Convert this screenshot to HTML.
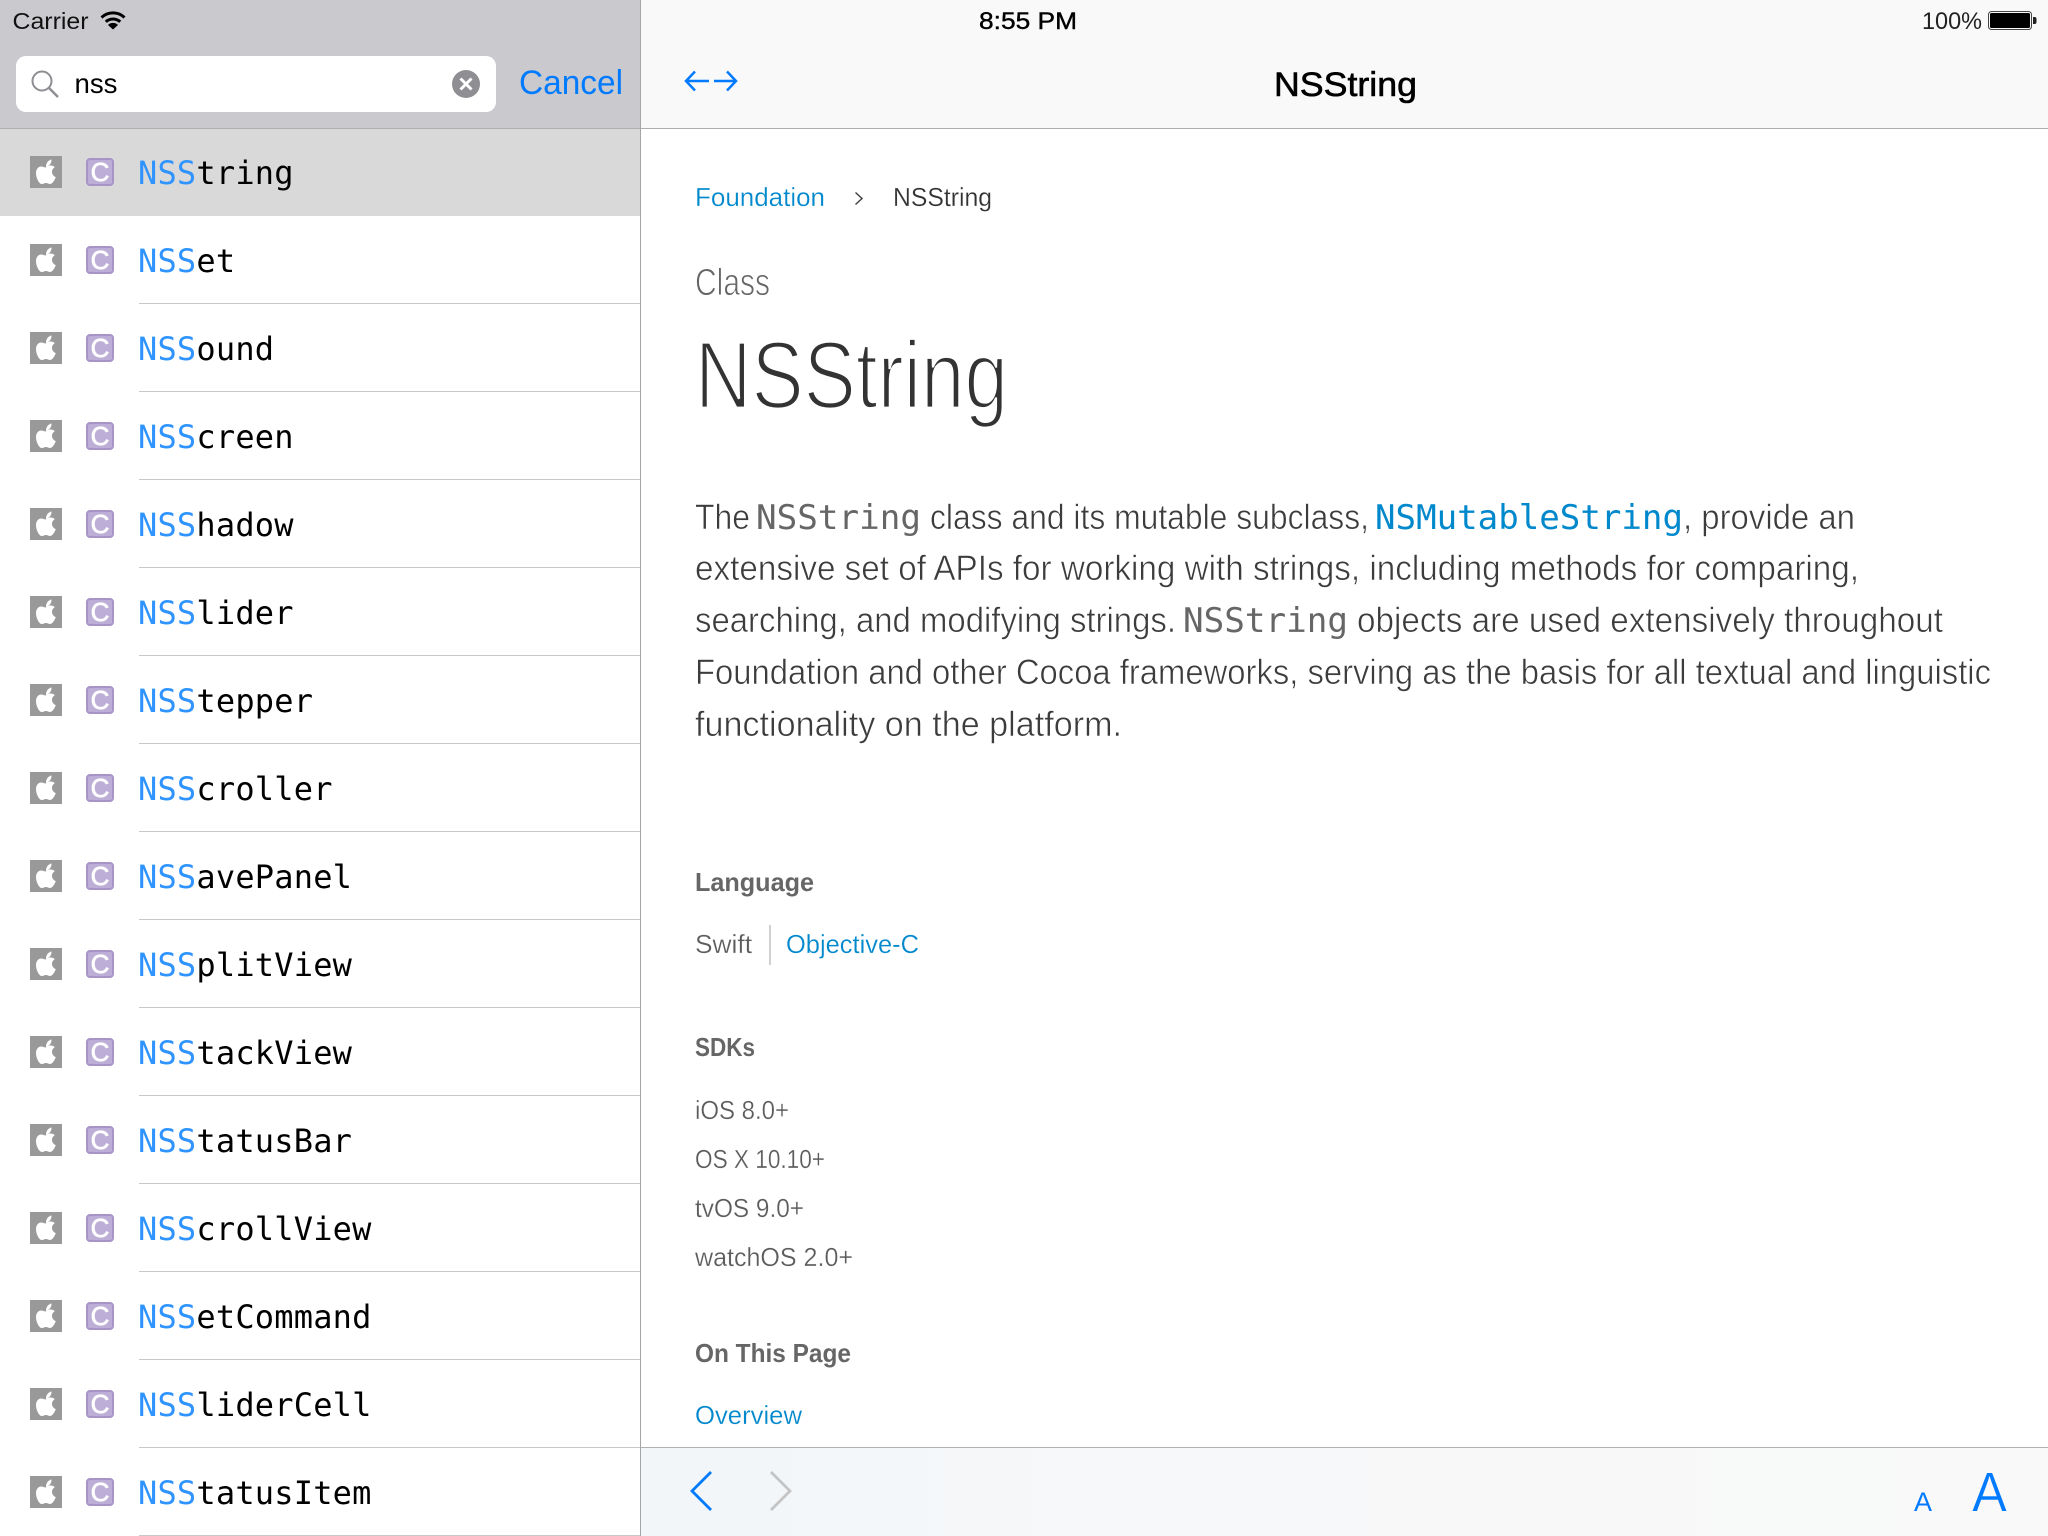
<!DOCTYPE html>
<html lang="en">
<head>
<meta charset="utf-8">
<title>NSString</title>
<style>
html,body{margin:0;padding:0;background:#fff;width:2048px;height:1536px;overflow:hidden}
svg{display:block}
text{font-family:"Liberation Sans",sans-serif}
.m{font-family:"DejaVu Sans Mono",monospace;font-size:32px;fill:#000;letter-spacing:.2px}
.m tspan{fill:#2f94ff}
.c{font-family:"Liberation Sans",sans-serif;font-size:26px;fill:#fff;stroke:#fff;stroke-width:.7;text-anchor:middle}
.b{font-size:35px;fill:#3c3c3c;stroke:#fff;stroke-width:.6}
.cm{font-family:"DejaVu Sans Mono",monospace;font-size:34px;fill:#666}
.s{font-size:26px;fill:#5c5c5c;stroke:#fff;stroke-width:.25}
.h{font-size:26px;font-weight:bold;fill:#666}
.l{font-size:26px;fill:#0088cc;stroke:#fff;stroke-width:.2}
</style>
</head>
<body>
<svg xmlns="http://www.w3.org/2000/svg" width="2048" height="1536" viewBox="0 0 2048 1536">
<defs>
<linearGradient id="bar" x1="0" x2="1" y1="0" y2="0"><stop offset="0" stop-color="#f2f6f9"/><stop offset=".4" stop-color="#f7f8f9"/><stop offset="1" stop-color="#f9f9f9"/></linearGradient>
<g id="ico">
<rect x="30" y="0" width="32" height="32" fill="#999"/>
<path transform="translate(30 0)" fill="#fff" d="M16 11.5c-1.5 0-3-1-4.7-1C8 10.5 6 13.5 6 17.2c0 4.5 3 10.8 6 10.8 1.5 0 2.3-1 4-1s2.5 1 4 1c2.4 0 4.5-3.8 5.8-6.8-2.4-1-3.8-3-3.8-5.3 0-2 1-3.6 2.8-4.7-1.2-1.2-2.8-1.7-4.2-1.7-1.8 0-3.3 1-4.6 1zM16 10.5c0-3.5 2.5-6.5 5.5-7 .3 3.5-2.3 6.8-5.5 7z"/>
<rect x="87" y="3" width="26" height="26" rx="3" fill="#bcaed6" stroke="#a895c6" stroke-width="2"/>
</g>
</defs>

<!-- backgrounds -->
<rect x="0" y="0" width="640" height="128" fill="#c9c9ce"/>
<rect x="641" y="0" width="1407" height="128" fill="#f9f9f9"/>
<rect x="0" y="128" width="2048" height="1" fill="#aeaeb0"/>
<rect x="0" y="129" width="640" height="87" fill="#d9d9d9"/>
<rect x="641" y="1448" width="1407" height="88" fill="url(#bar)"/>
<rect x="641" y="1447" width="1407" height="1" fill="#b0b0b0"/>
<rect x="640" y="0" width="1" height="1536" fill="#a5a5a8"/>

<!-- status bar -->
<text x="12.500" y="29" font-size="23" fill="#111" textLength="76" lengthAdjust="spacingAndGlyphs">Carrier</text>
<g fill="none" stroke="#000" stroke-width="3">
<path d="M101.500 17.500A16.500 16.500 0 0 1 124.500 17.500"/>
<path d="M105.800 21.800A10.500 10.500 0 0 1 120.200 21.800"/>
</g>
<path d="M108 25A7 7 0 0 1 118 25L113 29.500Z" fill="#000"/>
<text x="979" y="29" font-size="24" fill="#000" stroke="#000" stroke-width=".4" textLength="98" lengthAdjust="spacingAndGlyphs">8:55 PM</text>
<text x="1922" y="29" font-size="24" fill="#222" textLength="60" lengthAdjust="spacingAndGlyphs">100%</text>
<rect x="1988.500" y="11.500" width="43" height="18" rx="3" fill="none" stroke="#444" stroke-width="1"/>
<rect x="1990" y="13" width="40" height="15" rx="1.500" fill="#000"/>
<path d="M2033 17h1.500a2 2 0 0 1 2 2v3a2 2 0 0 1-2 2H2033z" fill="#222"/>

<!-- search -->
<rect x="16" y="56" width="480" height="56" rx="10" fill="#fff"/>
<circle cx="42" cy="81" r="9.500" fill="none" stroke="#8e8e93" stroke-width="2"/>
<path d="M49 88L58 97" stroke="#8e8e93" stroke-width="2.500" fill="none"/>
<text x="74.500" y="93" font-size="28" fill="#000" textLength="43" lengthAdjust="spacingAndGlyphs">nss</text>
<circle cx="466" cy="84" r="14" fill="#8e8e93"/>
<path d="M460.500 78.500L471.500 89.500M471.500 78.500L460.500 89.500" stroke="#fff" stroke-width="3" fill="none"/>
<text x="519" y="94" font-size="34" fill="#007aff" textLength="104" lengthAdjust="spacingAndGlyphs">Cancel</text>

<!-- nav bar -->
<g fill="none" stroke="#007aff" stroke-width="2.500">
<path d="M709 81H686M695 71.500L686 81L695 90.500"/>
<path d="M714 81H736M727 71.500L736 81L727 90.500"/>
</g>
<text x="1274" y="96" font-size="34" fill="#000" stroke="#000" stroke-width=".6" textLength="143" lengthAdjust="spacingAndGlyphs">NSString</text>

<!-- list separators -->
<g fill="#c8c7cc">
<rect x="139" y="303" width="501" height="1"/><rect x="139" y="391" width="501" height="1"/>
<rect x="139" y="479" width="501" height="1"/><rect x="139" y="567" width="501" height="1"/>
<rect x="139" y="655" width="501" height="1"/><rect x="139" y="743" width="501" height="1"/>
<rect x="139" y="831" width="501" height="1"/><rect x="139" y="919" width="501" height="1"/>
<rect x="139" y="1007" width="501" height="1"/><rect x="139" y="1095" width="501" height="1"/>
<rect x="139" y="1183" width="501" height="1"/><rect x="139" y="1271" width="501" height="1"/>
<rect x="139" y="1359" width="501" height="1"/><rect x="139" y="1447" width="501" height="1"/>
<rect x="139" y="1535" width="501" height="1"/>
</g>

<!-- list rows -->
<use href="#ico" y="156"/><text class="c" x="100" y="181">C</text><text class="m" x="138" y="184"><tspan>NSS</tspan>tring</text>
<use href="#ico" y="244"/><text class="c" x="100" y="269">C</text><text class="m" x="138" y="272"><tspan>NSS</tspan>et</text>
<use href="#ico" y="332"/><text class="c" x="100" y="357">C</text><text class="m" x="138" y="360"><tspan>NSS</tspan>ound</text>
<use href="#ico" y="420"/><text class="c" x="100" y="445">C</text><text class="m" x="138" y="448"><tspan>NSS</tspan>creen</text>
<use href="#ico" y="508"/><text class="c" x="100" y="533">C</text><text class="m" x="138" y="536"><tspan>NSS</tspan>hadow</text>
<use href="#ico" y="596"/><text class="c" x="100" y="621">C</text><text class="m" x="138" y="624"><tspan>NSS</tspan>lider</text>
<use href="#ico" y="684"/><text class="c" x="100" y="709">C</text><text class="m" x="138" y="712"><tspan>NSS</tspan>tepper</text>
<use href="#ico" y="772"/><text class="c" x="100" y="797">C</text><text class="m" x="138" y="800"><tspan>NSS</tspan>croller</text>
<use href="#ico" y="860"/><text class="c" x="100" y="885">C</text><text class="m" x="138" y="888"><tspan>NSS</tspan>avePanel</text>
<use href="#ico" y="948"/><text class="c" x="100" y="973">C</text><text class="m" x="138" y="976"><tspan>NSS</tspan>plitView</text>
<use href="#ico" y="1036"/><text class="c" x="100" y="1061">C</text><text class="m" x="138" y="1064"><tspan>NSS</tspan>tackView</text>
<use href="#ico" y="1124"/><text class="c" x="100" y="1149">C</text><text class="m" x="138" y="1152"><tspan>NSS</tspan>tatusBar</text>
<use href="#ico" y="1212"/><text class="c" x="100" y="1237">C</text><text class="m" x="138" y="1240"><tspan>NSS</tspan>crollView</text>
<use href="#ico" y="1300"/><text class="c" x="100" y="1325">C</text><text class="m" x="138" y="1328"><tspan>NSS</tspan>etCommand</text>
<use href="#ico" y="1388"/><text class="c" x="100" y="1413">C</text><text class="m" x="138" y="1416"><tspan>NSS</tspan>liderCell</text>
<use href="#ico" y="1476"/><text class="c" x="100" y="1501">C</text><text class="m" x="138" y="1504"><tspan>NSS</tspan>tatusItem</text>

<!-- breadcrumb -->
<text class="l" x="695" y="206" textLength="130" lengthAdjust="spacingAndGlyphs">Foundation</text>
<path d="M855.500 192.500L862 198.500L855.500 204.500" fill="none" stroke="#444" stroke-width="1.500"/>
<text x="893" y="206" font-size="26" fill="#333" stroke="#fff" stroke-width=".2" textLength="99" lengthAdjust="spacingAndGlyphs">NSString</text>

<!-- heading -->
<text x="695" y="295" font-size="38" fill="#666" stroke="#fff" stroke-width=".9" textLength="75" lengthAdjust="spacingAndGlyphs">Class</text>
<text x="695" y="408" font-size="96" fill="#333" stroke="#fff" stroke-width="2.800" textLength="313" lengthAdjust="spacingAndGlyphs">NSString</text>

<!-- body -->
<text class="b" x="695" y="529" textLength="55" lengthAdjust="spacingAndGlyphs">The</text>
<text class="cm" x="756" y="529" textLength="165" lengthAdjust="spacingAndGlyphs">NSString</text>
<text class="b" x="930" y="529" textLength="439" lengthAdjust="spacingAndGlyphs">class and its mutable subclass,</text>
<text class="cm" x="1375" y="529" style="fill:#0088cc" textLength="308" lengthAdjust="spacingAndGlyphs">NSMutableString</text>
<text class="b" x="1683" y="529" textLength="172" lengthAdjust="spacingAndGlyphs">, provide an</text>
<text class="b" x="695" y="580" textLength="1164" lengthAdjust="spacingAndGlyphs">extensive set of APIs for working with strings, including methods for comparing,</text>
<text class="b" x="695" y="632" textLength="481" lengthAdjust="spacingAndGlyphs">searching, and modifying strings.</text>
<text class="cm" x="1183" y="632" textLength="165" lengthAdjust="spacingAndGlyphs">NSString</text>
<text class="b" x="1357" y="632" textLength="586" lengthAdjust="spacingAndGlyphs">objects are used extensively throughout</text>
<text class="b" x="695" y="684" textLength="1296" lengthAdjust="spacingAndGlyphs">Foundation and other Cocoa frameworks, serving as the basis for all textual and linguistic</text>
<text class="b" x="695" y="736" textLength="427" lengthAdjust="spacingAndGlyphs">functionality on the platform.</text>

<!-- meta -->
<text class="h" x="695" y="891" textLength="119" lengthAdjust="spacingAndGlyphs">Language</text>
<text class="s" x="695" y="953" textLength="57" lengthAdjust="spacingAndGlyphs">Swift</text>
<rect x="769" y="925" width="2" height="40" fill="#d0d0d0"/>
<text class="l" x="786" y="953" textLength="133" lengthAdjust="spacingAndGlyphs">Objective-C</text>
<text class="h" x="695" y="1056" textLength="60" lengthAdjust="spacingAndGlyphs">SDKs</text>
<text class="s" x="695" y="1119" textLength="94" lengthAdjust="spacingAndGlyphs">iOS 8.0+</text>
<text class="s" x="695" y="1168" textLength="130" lengthAdjust="spacingAndGlyphs">OS X 10.10+</text>
<text class="s" x="695" y="1217" textLength="109" lengthAdjust="spacingAndGlyphs">tvOS 9.0+</text>
<text class="s" x="695" y="1266" textLength="158" lengthAdjust="spacingAndGlyphs">watchOS 2.0+</text>
<text class="h" x="695" y="1362" textLength="156" lengthAdjust="spacingAndGlyphs">On This Page</text>
<text class="l" x="695" y="1424" textLength="107" lengthAdjust="spacingAndGlyphs">Overview</text>

<!-- bottom bar -->
<path d="M711 1472L692 1491L711 1510" fill="none" stroke="#007aff" stroke-width="2.800"/>
<path d="M771 1472L790 1491L771 1510" fill="none" stroke="#c4c4c4" stroke-width="2.800"/>
<text x="1914" y="1511" font-size="27" fill="#007aff" textLength="18" lengthAdjust="spacingAndGlyphs">A</text>
<text x="1972" y="1511" font-size="56" fill="#007aff" stroke="#f9f9f9" stroke-width=".6" textLength="35" lengthAdjust="spacingAndGlyphs">A</text>
</svg>
</body>
</html>
